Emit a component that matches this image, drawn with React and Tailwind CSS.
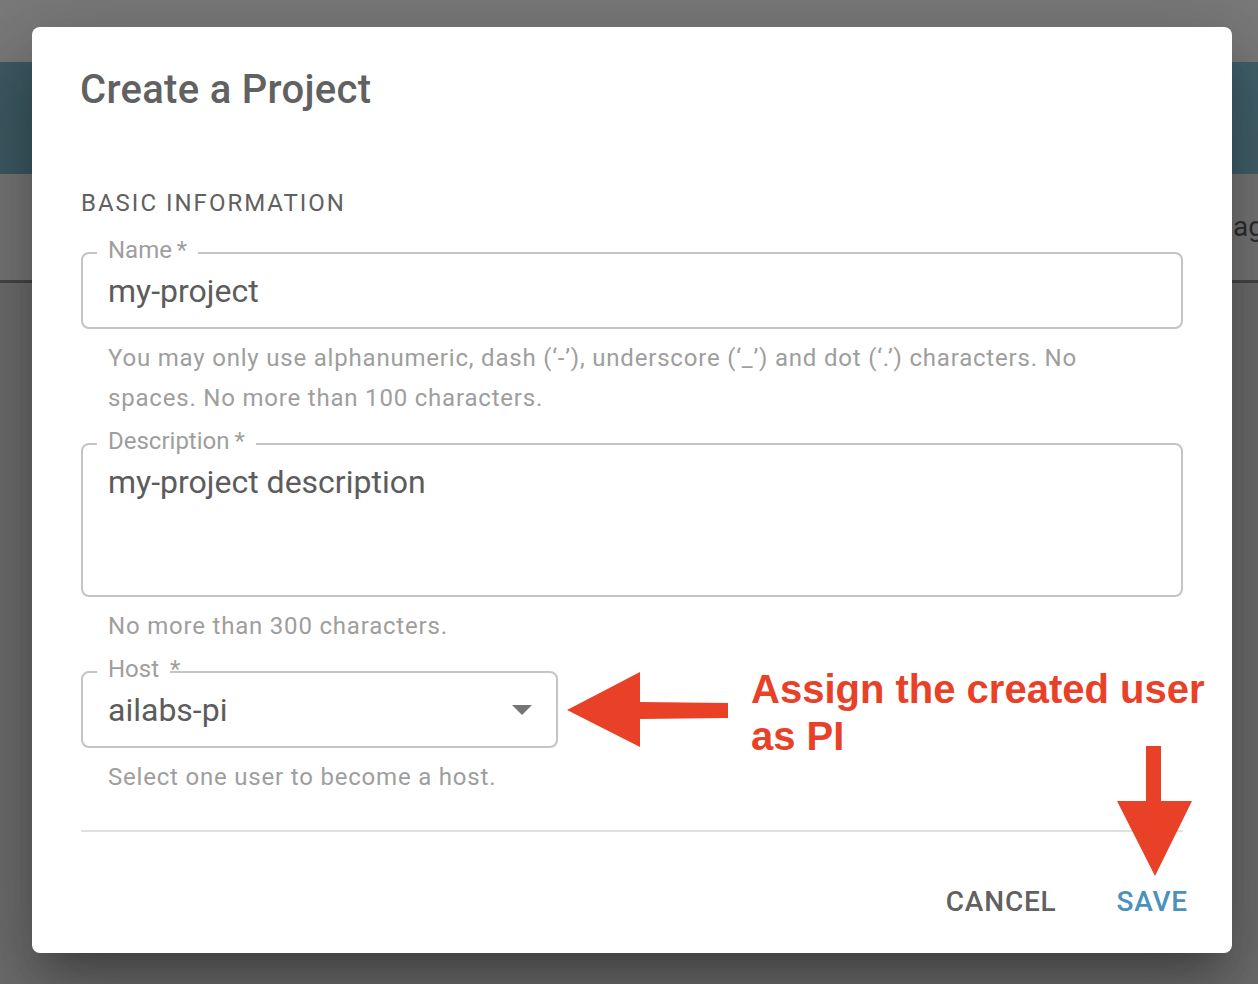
import React from 'react';

// Outlined text field with a notched label, MUI style (rendered at 2x)
const OutlinedBox = ({ label, className = '', children }) => (
  <div className={`relative rounded-[8px] border-2 border-[#c4c4c4] ${className}`}>
    <span className="absolute left-[14px] top-[-16px] bg-white px-[11px] text-[24px] leading-[24px] text-[#9e9e9e]">
      {label}
    </span>
    {children}
  </div>
);

const Helper = ({ children }) => (
  <p className="mt-[9px] pl-[27px] text-[24px] leading-[40px] tracking-[0.8px] text-[#9e9e9e]">{children}</p>
);

export default function App() {
  return (
    <div className="relative h-[984px] w-[1258px] overflow-hidden bg-[#6e6e6e] font-['Roboto',sans-serif]">
      {/* page behind the modal backdrop */}
      <div className="h-[62px] bg-[#7a7a7a]" />
      <div className="h-[112px] bg-gradient-to-r from-[#3d5a63] to-[#42616b]" />
      <div className="h-[106px] overflow-hidden whitespace-nowrap bg-[#777777] pl-[1233px] pt-[37px] text-[28px] leading-[32px] text-[#2f2f2f]">
        ag
      </div>
      <div className="h-[3px] bg-[#474747]" />

      {/* dialog */}
      <div className="absolute left-[32px] top-[27px] flex h-[926px] w-[1200px] flex-col rounded-[8px] bg-white shadow-[0_22px_30px_-14px_rgba(0,0,0,0.25),0_48px_76px_6px_rgba(0,0,0,0.16),0_18px_92px_16px_rgba(0,0,0,0.14)]">
        <h2 className="pl-[48px] pt-[31px] text-[40px] font-medium leading-[64px] tracking-[0.3px] text-[#616161]">
          Create a Project
        </h2>

        <div className="px-[49px]">
          <p className="mt-[65px] text-[24px] leading-[32px] tracking-[2px] text-[#616161]">BASIC INFORMATION</p>

          <OutlinedBox label={'Name\u2009*'} className="mt-[33px] h-[77px]">
            <div className="flex h-full items-center pl-[25px] text-[32px] leading-[46px] text-[#5c5c5c]">my-project</div>
          </OutlinedBox>
          <Helper>
            You may only use alphanumeric, dash (‘-’), underscore (‘_’) and dot (‘.’) characters. No
            <br />
            spaces. No more than 100 characters.
          </Helper>

          <OutlinedBox label={'Description\u2009*'} className="mt-[25px] h-[154px]">
            <div className="pl-[25px] pt-[14px] text-[32px] leading-[46px] text-[#5c5c5c]">my-project description</div>
          </OutlinedBox>
          <Helper>No more than 300 characters.</Helper>

          <div className="relative mt-[25px] h-[77px] w-[477px] rounded-[8px] border-2 border-[#c4c4c4]">
            <span className="absolute left-[14px] top-[-16px] flex text-[24px] leading-[24px] text-[#9e9e9e]">
              <span className="bg-white px-[11px]">Host</span>
              <span>*</span>
            </span>
            <div className="flex h-full items-center justify-between pl-[25px] pr-[24px]">
              <span className="text-[32px] leading-[46px] text-[#5c5c5c]">ailabs-pi</span>
              <svg width="20" height="10" viewBox="0 0 20 10">
                <path d="M0 0h20L10 10z" fill="#757575" />
              </svg>
            </div>
          </div>
          <Helper>Select one user to become a host.</Helper>

          <div className="mt-[33px] h-[2px] bg-[#e0e0e0]" />
        </div>

        <div className="mt-[45px] flex justify-end gap-[60px] pr-[44px] text-[28px] font-medium leading-[49px] tracking-[0.8px]">
          <button className="text-[#616161]">CANCEL</button>
          <button className="text-[#4a92b9]">SAVE</button>
        </div>
      </div>

      {/* annotation arrows */}
      <svg className="absolute left-0 top-0" width="1258" height="984" viewBox="0 0 1258 984">
        <polygon points="567,710 640,672 640,702 728,703 728,718 640,719 640,747" fill="#e94128" />
        <polygon points="1146,746 1161,746 1161,801 1192,801 1155,876 1117,801 1146,801" fill="#e94128" />
      </svg>
      <p className="absolute left-[751px] top-[666px] font-['Liberation_Sans',Arial,sans-serif] text-[40px] font-bold leading-[47px] text-[#e94128]">
        Assign the created user
        <br />
        as PI
      </p>
    </div>
  );
}
